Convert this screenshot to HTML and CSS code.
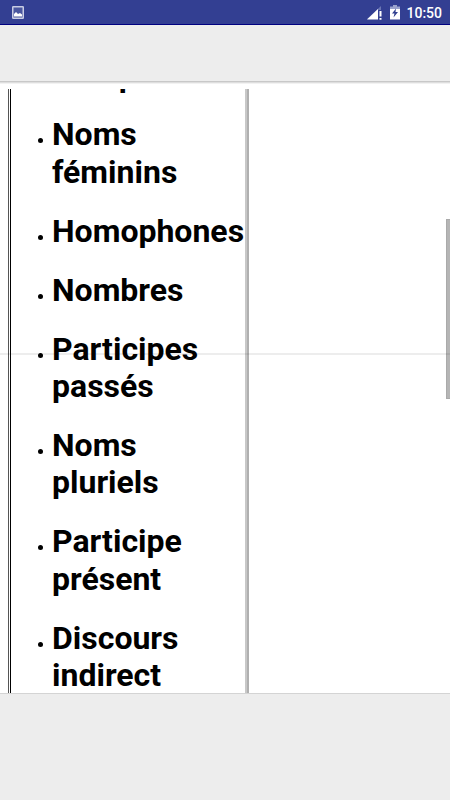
FILE: index.html
```html
<!DOCTYPE html>
<html lang="fr">
<head>
    <meta charset="UTF-8">
    <meta name="viewport" content="width=device-width, initial-scale=1.0">
    <title>Menu</title>
    <link rel="stylesheet" href="styles.css">
</head>
<body>
    <div class="status-bar">
        <svg class="picture" width="12" height="13" viewBox="0 0 12 13">
            <rect x="0.75" y="0.75" width="10.5" height="11.5" rx="0.5" fill="#4a569f" stroke="#c8cce3" stroke-width="1.5"/>
            <path d="M2 10.5V8l2-2 2 2 2-1 2 1.5v2z" fill="#fff"/>
        </svg>
        <svg class="signal" width="15" height="14" viewBox="0 0 15 14">
            <path d="M14 0v4h-3v9H0z" fill="#6b76b3"/>
            <path d="M11 3v10.5H0z" fill="#fff"/>
            <path d="M12.5 5h2v5.5h-2zM12.5 12h2v1.8h-2z" fill="#fff"/>
        </svg>
        <svg class="battery" width="10" height="15" viewBox="0 0 10 15">
            <path d="M3 0h4v1.5h3V5H0V1.5h3z" fill="#9ca4cd"/>
            <path d="M0 4h10v10.5H0z" fill="#fff"/>
            <path d="M6 3.5L2 8.5h2.5l-1 4L8 7H5.5z" fill="#303f8f"/>
        </svg>
        <span class="clock">10:50</span>
    </div>
    <div class="toolbar"></div>

    <div class="content">
        <div class="table">
            <ul class="cell">
                <li>Comparatif</li>
                <li>Noms féminins</li>
                <li>Homophones</li>
                <li>Nombres</li>
                <li>Participes passés</li>
                <li>Noms pluriels</li>
                <li>Participe présent</li>
                <li>Discours indirect</li>
            </ul>
        </div>
        <div class="divider"></div>
        <div class="scrollbar"></div>
    </div>
    <div class="footer"></div>
</body>
</html>
```
FILE: styles.css
```css
body {
    margin: 0;
    height: 800px;
    display: flex;
    flex-direction: column;
    overflow: hidden;
    background-color: #fff;
    font-family: Roboto, sans-serif;
    color: #000;
}
.status-bar {
    box-sizing: border-box;
    height: 25px;
    flex: none;
    display: flex;
    align-items: center;
    padding: 0 8px 0 12px;
    background-color: #333f92;
    border-bottom: 1px solid #000080;
    color: #fff;
}
.picture {
    margin-top: 1px;
}
.signal {
    margin-left: auto;
    margin-right: 8px;
    margin-top: 2px;
}
.battery {
    margin-right: 6px;
    margin-top: 1px;
}
.clock {
    font-size: 14px;
    font-weight: 500;
    line-height: 24px;
    margin-top: 2px;
}
.toolbar {
    height: 56px;
    flex: none;
    background-color: #ededed;
    box-shadow: 0 1px 0 #c8c8c8, 0 2px 0 #dedede, 0 3px 0 #f2f2f2;
}
.content {
    height: 604px;
    flex: none;
    margin-top: 8px;
    overflow: hidden;
    position: relative;
}
.table {
    box-sizing: border-box;
    width: 239px;
    height: 604px;
    margin-left: 8px;
    padding-left: 1px;
    border-left: 1px solid #555;
    border-right: 2px solid #c8c8c8;
    box-shadow: 2px 0 0 #b0b0b0;
}
.cell {
    height: 636px;
    margin: 0;
    padding: 0;
    display: flow-root;
    border-left: 1px solid #000;
    list-style: none;
    font-size: 32px;
    font-weight: bold;
    line-height: 37.5px;
}
.cell li {
    display: flex;
    width: 193px;
    padding-left: 41px;
    margin-bottom: 21.4px;
}
.cell li:first-child {
    margin-top: -31.5px;
}
.cell li::before {
    content: "";
    flex: none;
    width: 5px;
    height: 5px;
    margin: 22px 9px 0 -14px;
    border-radius: 50%;
    background-color: #000;
}
.divider {
    position: absolute;
    left: 0;
    right: 0;
    top: 264px;
    height: 2px;
    background-color: rgba(0, 0, 0, 0.07);
}
.scrollbar {
    box-sizing: border-box;
    position: absolute;
    right: 0;
    top: 130px;
    width: 4px;
    height: 180px;
    background-color: rgba(0, 0, 0, 0.29);
    border: 1px solid rgba(0, 0, 0, 0.06);
    border-right: 0;
}
.footer {
    flex: 1;
    background-color: #ededed;
    border-top: 1px solid #d4d4d4;
}
```
